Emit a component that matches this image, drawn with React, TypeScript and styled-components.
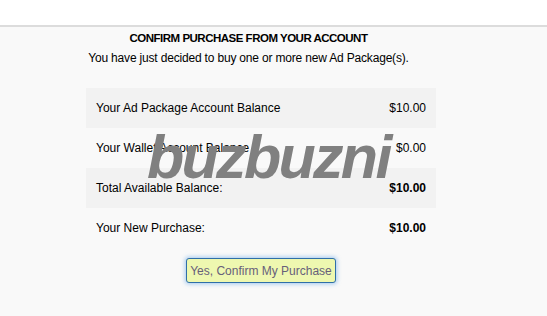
import React from "react";
import styled, { createGlobalStyle } from "styled-components";

const Global = createGlobalStyle`
  html, body { margin: 0; padding: 0; background: #f9f9f9; }
  body { font-family: "Liberation Sans", Arial, sans-serif; font-size: 12px; color: #000; }
`;

const TopBar = styled.div`
  height: 25px;
  background: #ffffff;
  border-bottom: 2px solid #dcdcdc;
`;

const Page = styled.div`
  position: relative;
  width: 497px;
  padding-top: 4px;
  min-height: 289px;
  box-sizing: border-box;
`;

const Title = styled.h1`
  margin: 0;
  font-size: 11.5px;
  font-weight: bold;
  letter-spacing: -0.5px;
  text-align: center;
  line-height: 14px;
`;

const Subtitle = styled.p`
  margin: 6px 0 0;
  font-size: 12px;
  letter-spacing: -0.18px;
  text-align: center;
  line-height: 14px;
`;

const Table = styled.div`
  margin: 23px 0 0 86px;
  width: 350px;
  display: flex;
  flex-direction: column;
`;

const Row = styled.div<{ $shade: boolean }>`
  height: 40px;
  display: flex;
  align-items: center;
  justify-content: space-between;
  padding: 0 10px;
  background: ${(p) => (p.$shade ? "#f2f2f2" : "transparent")};
`;

const Value = styled.span<{ $bold?: boolean }>`
  font-weight: ${(p) => (p.$bold ? "bold" : "normal")};
`;

const ButtonRow = styled.div`
  margin: 10px 0 0 86px;
  width: 350px;
  display: flex;
  justify-content: center;
`;

const ConfirmButton = styled.button`
  height: 25px;
  width: 150px;
  padding: 0;
  font-family: "Liberation Sans", Arial, sans-serif;
  font-size: 12px;
  color: #67607a;
  background: #eef8b0;
  border: 1px solid #2f6fa8;
  border-radius: 3px;
  box-shadow: 0 0 4px 1px rgba(90, 160, 230, 0.55);
`;

const Watermark = styled.div`
  position: absolute;
  left: 147px;
  top: 100px;
  font-family: "Liberation Sans", Arial, sans-serif;
  font-size: 61px;
  font-weight: bold;
  font-style: italic;
  letter-spacing: -2.7px;
  color: #808080;
  line-height: 1;
  pointer-events: none;
`;

const rows = [
  { label: "Your Ad Package Account Balance", value: "$10.00", bold: false },
  { label: "Your Wallet Account Balance", value: "$0.00", bold: false },
  { label: "Total Available Balance:", value: "$10.00", bold: true },
  { label: "Your New Purchase:", value: "$10.00", bold: true },
];

export default function App() {
  return (
    <>
      <Global />
      <TopBar />
      <Page>
        <Title>CONFIRM PURCHASE FROM YOUR ACCOUNT</Title>
        <Subtitle>You have just decided to buy one or more new Ad Package(s).</Subtitle>
        <Table>
          {rows.map((r, i) => (
            <Row key={r.label} $shade={i % 2 === 0}>
              <span>{r.label}</span>
              <Value $bold={r.bold}>{r.value}</Value>
            </Row>
          ))}
        </Table>
        <ButtonRow>
          <ConfirmButton>Yes, Confirm My Purchase</ConfirmButton>
        </ButtonRow>
        <Watermark>buzbuzni</Watermark>
      </Page>
    </>
  );
}
